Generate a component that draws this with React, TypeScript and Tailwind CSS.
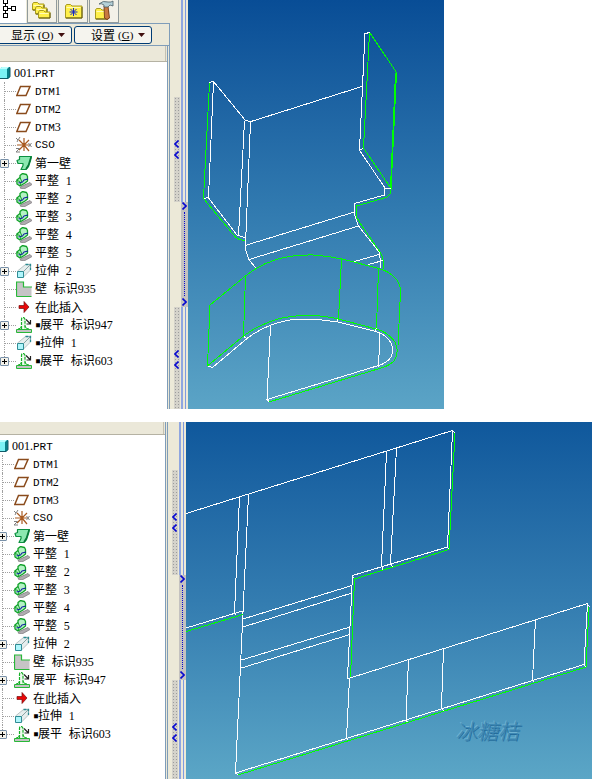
import type { ReactNode } from "react";

type IconName = "plane" | "csys" | "wall" | "flat" | "extrude" | "merge" | "insert" | "unbend";

type TreeItem = {
  icon: IconName;
  label: string;
  expandable?: boolean;
  marked?: boolean;
};

const baseItems: TreeItem[] = [
  { icon: "plane", label: "DTM1" },
  { icon: "plane", label: "DTM2" },
  { icon: "plane", label: "DTM3" },
  { icon: "csys", label: "CSO" },
  { icon: "wall", label: "第一壁", expandable: true },
  { icon: "flat", label: "平整 1" },
  { icon: "flat", label: "平整 2" },
  { icon: "flat", label: "平整 3" },
  { icon: "flat", label: "平整 4" },
  { icon: "flat", label: "平整 5" },
  { icon: "extrude", label: "拉伸 2", expandable: true },
  { icon: "merge", label: "壁 标识935" },
];

const foldedItems: TreeItem[] = [
  ...baseItems,
  { icon: "insert", label: "在此插入" },
  { icon: "unbend", label: "展平 标识947", expandable: true, marked: true },
  { icon: "extrude", label: "拉伸 1", marked: true },
  { icon: "unbend", label: "展平 标识603", expandable: true, marked: true },
];

const flatItems: TreeItem[] = [
  ...baseItems,
  { icon: "unbend", label: "展平 标识947", expandable: true },
  { icon: "insert", label: "在此插入" },
  { icon: "extrude", label: "拉伸 1", marked: true },
  { icon: "unbend", label: "展平 标识603", expandable: true, marked: true },
];

const icons: Record<IconName, ReactNode> = {
  plane: <path d="M4.500 3.500h9.500l-4 9H.8z" fill="none" stroke="#8a4b1c" strokeWidth="1.5" />,
  csys: (
    <g fill="none">
      <path d="M8 8h5M8 8 3 13M8 8 3 3M8 8V1M8 8l5-5M8 8l5 6M8 8v6M8 8H1" stroke="#a85a20" strokeWidth="1.2" />
      <path d="m0 1 2 2 2-3M2 3 1 5M12.500 6l3 4M15.500 6l-3 4M0 11.500h3.500L0 15h4" stroke="#808080" />
    </g>
  ),
  wall: (
    <g strokeLinejoin="round">
      <path d="M3.500 1.500h12l-1 4-2 6-2.500 3h-5l2-4v-2h-5l-1-3 2.500-1z" fill="#8ce8b0" stroke="#0c9040" strokeWidth="1.2" />
      <path d="m15 2-2.500 8-2.500 4" fill="none" stroke="#087838" strokeWidth="1.500" />
    </g>
  ),
  flat: (
    <g strokeLinejoin="round">
      <path d="m5 13.500 9-4 2 2-8 4.500-4-1z" fill="#b0acb0" stroke="#807c80" strokeWidth=".8" />
      <path d="M.8 7 4 4.500V2.500l2.500-2 4 1 1 2V8L9 10l-5 3-3-2z" fill="#b4f2c4" stroke="#10a028" strokeWidth="1.3" />
      <path d="M4 4.500 5.500 8 4 12.500M1 7.500l3 1" fill="none" stroke="#10a028" />
      <path d="m2.500 10 4-1 1.500-2 4-1" fill="none" stroke="#1020a0" strokeWidth="1.2" />
    </g>
  ),
  extrude: (
    <g>
      <path d="m1.500 8 8-6.500h5V7l-7 7z" fill="#e6eeee" stroke="#a8b6b6" strokeWidth=".8" />
      <path d="M9.500 1.500h5V7" fill="none" stroke="#2a8a90" strokeWidth="1.3" strokeDasharray="3 1" />
      <path d="M7.500 8.500 14 2" fill="none" stroke="#8aa4a4" />
      <path d="M1.500 8.500h6v6h-6z" fill="#b0f6fc" stroke="#308c94" />
    </g>
  ),
  merge: (
    <g>
      <path d="M.5 1h7v5h8v9.500H.5z" fill="#c6c4c6" />
      <path d="M.5 15.500V1h7v5h8.500M.5 15.500h15" fill="none" stroke="#28b838" strokeWidth="1.2" />
    </g>
  ),
  insert: <path d="M3 6.500h5V2.500L13 8l-5 5.500v-4H3z" fill="#e80808" stroke="#701010" strokeWidth=".7" />,
  unbend: (
    <g fill="none">
      <path d="M.5 12.500h15v3H.5z" fill="#c4c2c4" stroke="#28b838" />
      <path d="M5.500 12V2.500q0-2 1.500-2t2 2V12" fill="#eefaee" stroke="#18b028" strokeWidth="1.2" strokeDasharray="3 1" />
      <path d="M2 12q3 0 3.500-3M13 12q-3.500 0-4-3" stroke="#18b028" />
      <path d="m10 2.500 4 4M14.500 3v4h-4" stroke="#222" strokeWidth="1.2" />
    </g>
  ),
};

function TreeLabel({ text }: { text: string }) {
  const parts = text.match(/[A-Z ]+|[0-9.]+|[^A-Z0-9. ]+/g) ?? [];

  const partClass = (part: string) => {
    if (/^[A-Z ]/.test(part)) return "text-[11px] font-[Liberation_Mono,monospace]";
    if (/^[0-9.]/.test(part)) return "text-[12px] font-[Liberation_Serif,serif]";
    return "text-[12px] font-[Noto_Sans_CJK_SC,sans-serif]";
  };

  return (
    <span className="flex items-baseline whitespace-pre">
      {parts.map((part, index) => (
        <span key={index} className={partClass(part)}>
          {part}
        </span>
      ))}
    </span>
  );
}

function TreeRow({ item, last }: { item: TreeItem; last: boolean }) {
  return (
    <li className="flex h-[18px] items-center">
      <span className="relative h-full w-4 shrink-0">
        <span className={`absolute left-1 top-0 border-l border-dotted border-[#a0a0a0] ${last ? "h-1/2" : "h-full"}`} />
        <span className="absolute left-1 top-1/2 w-3 border-t border-dotted border-[#a0a0a0]" />
        {item.expandable && (
          <button
            aria-label={`+ ${item.label}`}
            className="absolute left-0 top-[5px] flex size-[9px] items-center justify-center rounded-[1px] border border-[#7890a8] bg-[#f4f2ea]"
          >
            <svg viewBox="0 0 5 5" className="size-[5px] shrink-0" shapeRendering="crispEdges">
              <path d="M0 2.500h5M2.500 0v5" stroke="#000" />
            </svg>
          </button>
        )}
      </span>
      <svg viewBox="0 0 16 16" className="mr-[3px] size-4 shrink-0">
        {icons[item.icon]}
      </svg>
      {item.marked && <span className="w-[5px] text-[10px] font-[DejaVu_Sans_Mono,monospace]">▪</span>}
      <TreeLabel text={item.label} />
    </li>
  );
}

function ModelTree({ items, headerClass }: { items: TreeItem[]; headerClass: string }) {
  return (
    <div className="mr-px flex flex-1 flex-col border-r border-[#7f9db9] bg-white">
      <div className={`border-b border-[#b5b2a3] bg-[#ebe8d9] ${headerClass}`}>
        <div className="ml-auto h-full w-[2px] border-l border-[#c4c1b2]" />
      </div>
      <div className="pt-0.5 text-black">
        <div className="flex h-[18px] items-center">
          <svg viewBox="0 0 14 14" className="w-[14px] shrink-0">
            <path d="M0 3 2 1h8v10l-2 2H0z" fill="#087f88" />
            <path d="M0 3h7v9H0z" fill="#7bf2f5" />
            <path d="m0 2 2-1h7L7 3H0z" fill="#b8ffff" />
            <path d="M0 12.500h8l2-2V1.500" fill="none" stroke="#125a68" />
          </svg>
          <TreeLabel text="001.PRT" />
        </div>
        <ul>
          {items.map((item, index) => (
            <TreeRow key={index} item={item} last={index === items.length - 1} />
          ))}
        </ul>
      </div>
    </div>
  );
}

function Chevrons({ direction, className }: { direction: "left" | "right"; className: string }) {
  return (
    <svg viewBox="0 0 5 8" className={`w-[5px] shrink-0 ${className}`}>
      <path d={direction === "left" ? "M4.500 .5 1 4l3.500 3.500" : "M.5 .5 4 4 .5 7.500"} fill="none" stroke="#0808d0" strokeWidth="1.6" />
    </svg>
  );
}

function Grip({ className }: { className: string }) {
  return (
    <div
      className={`ml-1 flex w-[6px] flex-col items-start bg-[#d4d2ca] bg-[radial-gradient(#9c9c9c_1px,transparent_1px)] bg-[size:3px_3px] pt-[43px] ${className}`}
    >
      <Chevrons direction="left" className="mb-[3px] h-2" />
      <Chevrons direction="left" className="h-2" />
    </div>
  );
}

function Rails({ className }: { className: string }) {
  return (
    <div className={`flex justify-between bg-[#ece9d8] pr-0.5 ${className}`}>
      <span className="w-[2px] bg-[#8fa6e0]" />
      <span className="w-px bg-[#7f9be0]" />
    </div>
  );
}

function Splitter({ topClass }: { topClass: string }) {
  return (
    <div className="flex w-[18px] shrink-0 bg-[#ece9d8]">
      <div className="flex w-[11px] flex-col">
        <div className={topClass} />
        <Grip className="h-[105px]" />
        <div className="h-[105px]" />
        <Grip className="flex-1" />
      </div>
      <div className="flex w-[7px] flex-col">
        <Rails className={topClass} />
        <Rails className="h-[105px]" />
        <div className="flex h-[105px] flex-col items-center bg-[#c4c2c0] pb-px">
          <Chevrons direction="right" className="h-2" />
          <div className="my-0.5 flex-1 border-l border-dotted border-[#0808d0]" />
          <Chevrons direction="right" className="h-2" />
        </div>
        <Rails className="flex-1" />
      </div>
    </div>
  );
}

function MenuButton({ label, hotkey, className }: { label: string; hotkey: string; className: string }) {
  return (
    <button
      className={`flex h-[18px] items-center justify-end rounded-[3px] border border-[#003c74] bg-[#f5f4ee] pr-1.5 text-[12px] text-black font-[Noto_Sans_CJK_SC,sans-serif] ${className}`}
    >
      {label}
      <span className="ml-[3px] w-[15px] text-[11px] font-[Liberation_Serif,serif]">
        (<u>{hotkey}</u>)
      </span>
      <svg viewBox="0 0 7 4" className="ml-[5px] h-1 w-[7px] shrink-0">
        <path d="M0 0h7L3.500 4z" fill="#401010" />
      </svg>
    </button>
  );
}

function Folder({ x, y, w, h }: { x: number; y: number; w: number; h: number }) {
  return (
    <g transform={`translate(${x} ${y})`}>
      <path d={`M.5 ${h}V2l1-1.500h4L7 2h${w - 7}v${h - 2}z`} fill="#fff04a" stroke="#a89a20" />
      <path d={`M1.500 3.500h${w - 3}`} stroke="#fffbb8" />
      <path d={`M1 ${h}h${w - 1}V3`} fill="none" stroke="#5c5410" />
    </g>
  );
}

const tabClass = "flex h-full w-[30px] items-center justify-center border-x border-b border-[#919b9c] bg-[#f3f1e8]";

function TabBar() {
  return (
    <div className="flex h-[23px] gap-px">
      <button aria-label="模型树" className="h-full w-[26px] bg-white">
        <svg viewBox="0 0 26 23" className="w-[26px]" shapeRendering="crispEdges">
          <path d="M3.500-.500h4v4h-4zM3.500 6.500h4v4h-4zM3.500 13.500h4v4h-4zM11.500 6.500h4v4h-4zM5.500 3v3M5.500 11v2M8 8.500h3" fill="none" stroke="#000" />
        </svg>
      </button>
      <button aria-label="文件夹" className={tabClass}>
        <svg viewBox="0 0 22 22" className="w-[22px]">
          <Folder x={1} y={2} w={12} h={8} />
          <Folder x={4} y={6} w={12} h={8} />
          <Folder x={7} y={10} w={12} h={8} />
        </svg>
      </button>
      <button aria-label="收藏夹" className={tabClass}>
        <svg viewBox="0 0 22 22" className="w-[22px]">
          <Folder x={3} y={4} w={17} h={14} />
          <path d="M11.500 8v8M7.500 12h8M8.500 9l6 6M14.500 9l-6 6" stroke="#1428c8" />
        </svg>
      </button>
      <button aria-label="连接" className={tabClass}>
        <svg viewBox="0 0 22 22" className="w-[22px]">
          <Folder x={2} y={8} w={13} h={11} />
          <path d="M11 6h4l1.500 12q-2.500 3-5 0z" fill="#c87840" stroke="#6a3010" strokeWidth=".8" />
          <path d="M6 4q4-4 9-2h3l2-1v5l-3-1-2 2h-4V5Q8 3 6 4z" fill="#b4d0d8" stroke="#4c6068" strokeWidth=".8" />
        </svg>
      </button>
    </div>
  );
}

function FoldedPart() {
  return (
    <svg
      viewBox="188 0 257 409"
      preserveAspectRatio="xMinYMin slice"
      className="h-[409px] min-w-0 flex-1 bg-linear-to-b from-[#084d96] via-[#3079af] to-[#5ba4c6]"
      fill="none"
      shapeRendering="crispEdges"
    >
      <g stroke="#fff">
        <path d="M209 82.500 213.500 81.500 245.500 120.500 251 121.500 362 86.500" />
        <path d="M213.500 82 208.500 197.500 204 198.500M208.500 198 237 235 245 237.500M244.500 121 238.500 236M250.500 122 245.500 245" />
        <path d="M370 32.500 365 33.500 359.500 150 363 148.500M360 151 385 188 391 189M384.500 188V195L354.500 203.500V215L358.500 226 379.500 252.500 381 268" />
        <path d="M245.500 240V250L249 259.500 256 268.500M245 245.500 354.500 212M249 259.500 358.500 226M354.500 261.500 379 254.500M368.500 264.500 383 260.500" />
        <path d="M208 366 212.500 367.500 247 338.500Q258 330 270 325.500Q286 319 303 319Q320 319 338 322L376 331.500Q387 335 391 343Q394 350 391 357Q387 363 378.500 365.500L267 399.500 270.500 326" />
        <path d="M380 333 378.500 367M243 336 247 338.500M338 319 337.500 322M376.500 328 375 331M267 399 269 402" />
      </g>
      <g stroke="#00ff00">
        <path d="M209.500 83 203.500 198.500 235 236.500Q238 240 245 240.500" />
        <path d="M369.500 33 363.500 148 390 187M370 33 396.500 72.500 391 190Q391 195 386 197.500L356.500 206V217L362 226 380 252Q384 258 383.500 269M395.500 73 390.500 188" />
        <path d="M207.500 366 210 305 245.500 276Q259 265 276 259.500Q294 254.500 313 255Q328 256 342 259L379 268.500Q391 272 397 280Q401 286 400.500 292L398 345" />
        <path d="M207.500 366 243.500 336Q258 325 279.500 318.500Q308 312 338.500 319L376 329Q388 332 395 342Q400 352 394 361Q389 366 379.500 368.500L269 402" />
        <path d="M245.500 276 243.500 336M341.500 259 338.500 319M378.500 269 376.500 328" />
      </g>
    </svg>
  );
}

function FlatPart() {
  return (
    <svg
      viewBox="186 422 406 357"
      preserveAspectRatio="xMinYMin slice"
      className="h-[357px] w-full bg-linear-to-b from-[#0f589c] via-[#337cb0] to-[#5ba6c6]"
      fill="none"
      shapeRendering="crispEdges"
    >
      <g stroke="#fff">
        <path d="M186 513.500 452.500 430.500 455 433.500M452.500 431 447.500 547 352.500 575.500 347.500 678H350L587.500 603.500 584 664.500 235.500 773 243 612 248.500 495" />
        <path d="M239.500 497 234.500 613 236 615M186 628 242.500 611M386.500 452 381.500 566 383 570M396.500 448 390.500 564 393 567" />
        <path d="M243 619 352 585.500M243 627 352 593M241.500 660 350 627M241.500 668 350 634.500M352.500 576 354.500 579" />
        <path d="M349.500 678 346.500 738 348 741M408.500 659 406 720 408 723M443.500 648.500 441.500 708 444 711M535.500 619.500 532.500 680 535 683M587 603.500 589.500 607M584 664.500 586 667M235.500 773 238 775M447.500 547 449 549.500" />
      </g>
      <g stroke="#00ff00">
        <path d="M455 433.500 449 549.500 354.500 579 350.500 677.500" />
        <path d="M186 631.500 243 614.500M589 607 586 667 238 775" />
      </g>
    </svg>
  );
}

export default function App() {
  return (
    <main className="flex flex-col gap-[13px] overflow-hidden bg-white leading-none">
      <section className="flex w-3/4">
        <aside className="flex w-[170px] shrink-0 flex-col bg-[#ece9d8]">
          <TabBar />
          <div className="flex flex-1 flex-col border-r border-t border-[#7f9db9]">
            <div className="flex h-[21px] items-end gap-0.5 pb-px">
              <MenuButton label="显示" hotkey="O" className="-ml-1 w-[76px]" />
              <MenuButton label="设置" hotkey="G" className="w-[78px]" />
            </div>
            <div className="flex flex-1 border-t border-[#7f9db9]">
              <ModelTree items={foldedItems} headerClass="h-4" />
            </div>
          </div>
        </aside>
        <Splitter topClass="h-[97px]" />
        <FoldedPart />
      </section>

      <section className="-ml-0.5 flex">
        <aside className="flex w-[170px] shrink-0 border-r border-[#7f9db9] bg-[#ece9d8]">
          <ModelTree items={flatItems} headerClass="h-[13px]" />
        </aside>
        <Splitter topClass="h-12" />
        <div className="relative min-w-0 flex-1">
          <FlatPart />
          <span className="absolute bottom-[38px] right-[73px] text-[21px] font-light italic text-[#3d88b4] [text-shadow:1px_1px_0_#256c9c,-1px_-1px_0_#6fb2d2] font-[Noto_Sans_CJK_SC,sans-serif]">
            冰糖桔
          </span>
        </div>
      </section>
    </main>
  );
}
